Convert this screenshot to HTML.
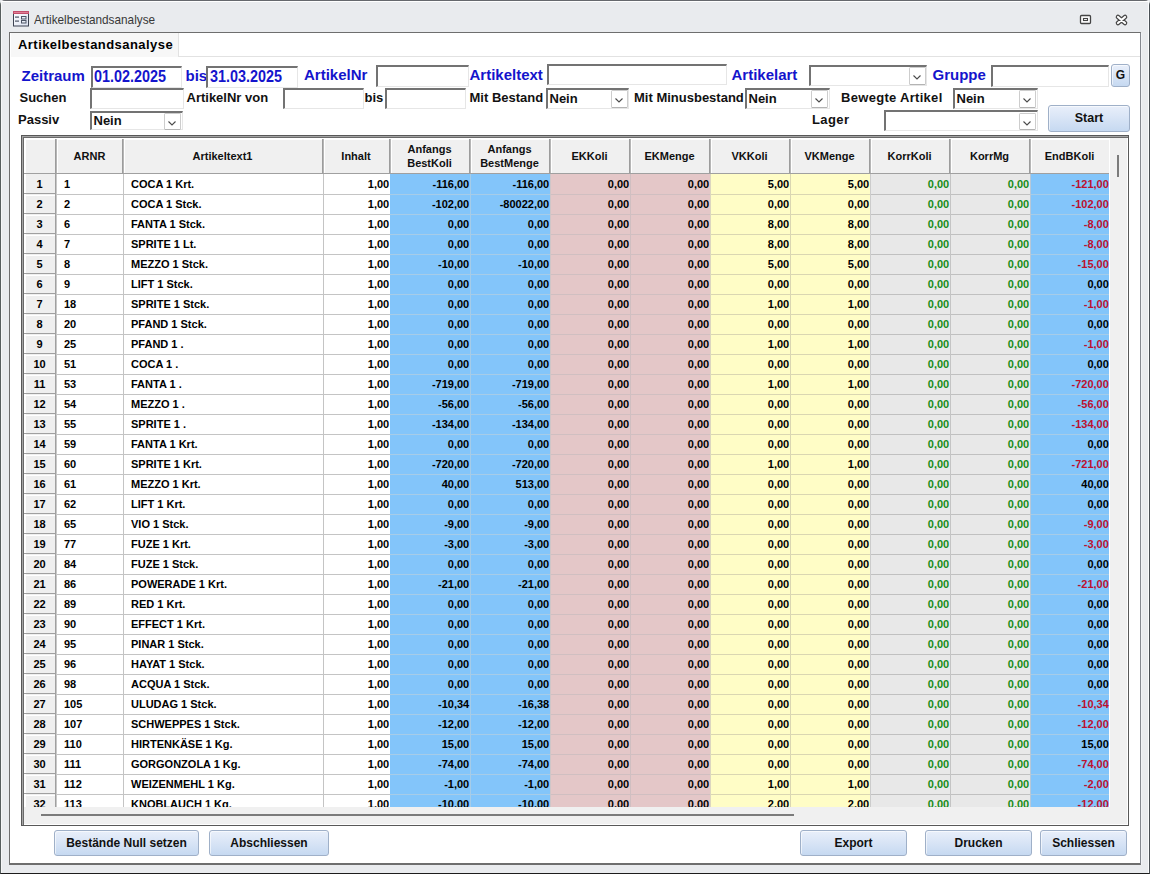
<!DOCTYPE html>
<html><head><meta charset="utf-8"><title>Artikelbestandsanalyse</title>
<style>
html,body{margin:0;padding:0;}
body{width:1150px;height:874px;overflow:hidden;position:relative;background:#e9ebee;font-family:"Liberation Sans", sans-serif;}
div,span{position:absolute;box-sizing:border-box;}
span{white-space:nowrap;line-height:1;}
.tb{background:#fff;border-top:2px solid #737373;border-left:2px solid #737373;border-right:1px solid #e6e6e6;border-bottom:1px solid #e6e6e6;}
.dd{background:#fff;border:1px solid #cdcdcd;border-bottom-color:#b4b4b4;border-radius:1.5px;}
.btn{border:1px solid #9fb0c8;border-radius:3px;background:linear-gradient(#e9effa,#c6d9f1);box-shadow:inset 1px 1px 0 rgba(255,255,255,.6);}
</style></head><body>

<div style="left:0px;top:0px;width:1150px;height:874px;border:1px solid #575e5e;border-top-color:#66686d;border-right-color:#4a5055;border-bottom-color:#1c1c1c;border-radius:5px 5px 0 0;"></div>
<div style="left:1px;top:1px;width:1148px;height:1px;background:#fff;"></div>
<div style="left:1px;top:1px;width:1px;height:872px;background:#f6f7f8;"></div>
<div style="left:1148px;top:1px;width:1px;height:872px;background:#fbfcfd;"></div>
<div style="left:1141px;top:33px;width:1px;height:832px;background:#f1f3f6;"></div>
<svg style="position:absolute;left:13px;top:11px" width="16" height="16" viewBox="0 0 16 16">
<defs><linearGradient id="ig" x1="0" y1="0" x2="1" y2="1"><stop offset="0" stop-color="#ffffff"/><stop offset="1" stop-color="#dde3f2"/></linearGradient></defs>
<rect x="0.5" y="0.5" width="15" height="14.5" fill="url(#ig)" stroke="#3d4352"/>
<rect x="0" y="0" width="16" height="3" fill="#c24f6c"/>
<rect x="1" y="1" width="14" height="1" fill="#e07d95"/>
<rect x="2" y="5.5" width="4" height="1.2" fill="#4d5566"/>
<rect x="2" y="9.5" width="4" height="1.2" fill="#4d5566"/>
<rect x="8.5" y="5.5" width="4.5" height="2.5" fill="#e9edf6" stroke="#4d5566" stroke-width="1"/>
<rect x="8.5" y="9.5" width="4.5" height="2.5" fill="#e9edf6" stroke="#4d5566" stroke-width="1"/>
</svg>
<span style="left:33.50px;top:13.73px;font-size:12.6px;font-weight:normal;color:#383838;transform:scaleX(0.935);transform-origin:0 0;">Artikelbestandsanalyse</span>
<svg style="position:absolute;left:1078px;top:13px" width="52" height="14" viewBox="0 0 52 14">
<rect x="2.5" y="2.5" width="10" height="8" rx="1" fill="#fff" stroke="#444" stroke-width="1.3"/>
<rect x="5.5" y="5.5" width="4" height="2" fill="#fff" stroke="#444" stroke-width="1.1"/>
<path d="M40 4 L47 10 M47 4 L40 10" stroke="#464646" stroke-width="4.6" stroke-linecap="round"/>
<path d="M40 4 L47 10 M47 4 L40 10" stroke="#fff" stroke-width="2.2" stroke-linecap="round"/>
</svg>
<div style="left:9px;top:32px;width:1132px;height:833px;background:#fff;border-left:1px solid #6e6e6e;border-top:1px solid #6e6e6e;border-right:1px solid #858990;border-bottom:2px solid #6e6e6e;"></div>
<div style="left:178px;top:33px;width:962px;height:24px;background:#fff;border-left:1px solid #e2e2e2;border-bottom:1px solid #e2e2e2;"></div>
<div style="left:10px;top:33px;width:168px;height:24px;background:#f7f7f7;border-left:1px solid #fff;"></div>
<span style="left:18.00px;top:38.40px;font-size:13px;font-weight:bold;color:#000;letter-spacing:0.45px">Artikelbestandsanalyse</span>
<span style="left:21.50px;top:68.00px;font-size:15px;font-weight:bold;color:#1414cc;">Zeitraum</span>
<div class="tb" style="left:91px;top:66px;width:91px;height:22px"></div>
<span style="left:94.00px;top:68.83px;font-size:15.8px;font-weight:bold;color:#1414cc;transform:scaleX(0.91);transform-origin:0 0;">01.02.2025</span>
<span style="left:185.50px;top:68.30px;font-size:15px;font-weight:bold;color:#1414cc;">bis</span>
<div class="tb" style="left:206px;top:66px;width:92px;height:22px"></div>
<span style="left:209.50px;top:68.83px;font-size:15.8px;font-weight:bold;color:#1414cc;transform:scaleX(0.91);transform-origin:0 0;">31.03.2025</span>
<span style="left:304.00px;top:67.10px;font-size:15px;font-weight:bold;color:#1414cc;">ArtikelNr</span>
<div class="tb" style="left:376px;top:65px;width:93px;height:22px"></div>
<span style="left:469.50px;top:67.10px;font-size:15px;font-weight:bold;color:#1414cc;">Artikeltext</span>
<div class="tb" style="left:547px;top:64px;width:180px;height:21px"></div>
<span style="left:731.50px;top:67.10px;font-size:15px;font-weight:bold;color:#1414cc;">Artikelart</span>
<div class="tb" style="left:809px;top:65px;width:118px;height:21px"></div>
<div class="dd" style="left:909px;top:67px;width:17px;height:18px"></div>
<svg style="position:absolute;left:911.5px;top:73.1px" width="10" height="8" viewBox="0 0 10 8"><path d="M1.5 2.5 L5 6 L8.5 2.5" fill="none" stroke="#4a4a4a" stroke-width="1.1"/></svg>
<span style="left:932.50px;top:67.10px;font-size:15px;font-weight:bold;color:#1414cc;">Gruppe</span>
<div class="tb" style="left:991px;top:65px;width:118px;height:22px"></div>
<div class="btn" style="left:1111px;top:64px;width:19px;height:23px"></div>
<span style="left:1110.50px;width:20px;text-align:center;top:69.34px;font-size:12px;font-weight:bold;color:#111;">G</span>
<span style="left:19.50px;top:91.30px;font-size:13px;font-weight:bold;color:#111;">Suchen</span>
<div class="tb" style="left:90px;top:88px;width:94px;height:21px"></div>
<span style="left:186.50px;top:90.70px;font-size:13px;font-weight:bold;color:#111;">ArtikelNr von</span>
<div class="tb" style="left:283px;top:88px;width:81px;height:21px"></div>
<span style="left:364.50px;top:90.70px;font-size:13px;font-weight:bold;color:#111;">bis</span>
<div class="tb" style="left:385px;top:88px;width:81px;height:21px"></div>
<span style="left:469.50px;top:90.70px;font-size:13px;font-weight:bold;color:#111;">Mit Bestand</span>
<div class="tb" style="left:546px;top:88px;width:83px;height:21px"></div>
<div class="dd" style="left:611px;top:90px;width:17px;height:18px"></div>
<svg style="position:absolute;left:613.5px;top:96.1px" width="10" height="8" viewBox="0 0 10 8"><path d="M1.5 2.5 L5 6 L8.5 2.5" fill="none" stroke="#4a4a4a" stroke-width="1.1"/></svg>
<span style="left:549.50px;top:91.60px;font-size:13px;font-weight:bold;color:#111;">Nein</span>
<span style="left:634.00px;top:90.70px;font-size:13px;font-weight:bold;color:#111;">Mit Minusbestand</span>
<div class="tb" style="left:745px;top:88px;width:85px;height:21px"></div>
<div class="dd" style="left:811px;top:90px;width:17px;height:18px"></div>
<svg style="position:absolute;left:813.5px;top:96.1px" width="10" height="8" viewBox="0 0 10 8"><path d="M1.5 2.5 L5 6 L8.5 2.5" fill="none" stroke="#4a4a4a" stroke-width="1.1"/></svg>
<span style="left:748.50px;top:91.60px;font-size:13px;font-weight:bold;color:#111;">Nein</span>
<span style="left:841.00px;top:90.70px;font-size:13px;font-weight:bold;color:#111;letter-spacing:0.3px">Bewegte Artikel</span>
<div class="tb" style="left:953px;top:88px;width:85px;height:21px"></div>
<div class="dd" style="left:1019px;top:90px;width:17px;height:18px"></div>
<svg style="position:absolute;left:1021.5px;top:96.1px" width="10" height="8" viewBox="0 0 10 8"><path d="M1.5 2.5 L5 6 L8.5 2.5" fill="none" stroke="#4a4a4a" stroke-width="1.1"/></svg>
<span style="left:956.50px;top:91.60px;font-size:13px;font-weight:bold;color:#111;">Nein</span>
<span style="left:18.00px;top:112.90px;font-size:13px;font-weight:bold;color:#111;">Passiv</span>
<div class="tb" style="left:90px;top:111px;width:93px;height:19px"></div>
<div class="dd" style="left:164px;top:113px;width:17px;height:17px"></div>
<svg style="position:absolute;left:166.5px;top:118.6px" width="10" height="8" viewBox="0 0 10 8"><path d="M1.5 2.5 L5 6 L8.5 2.5" fill="none" stroke="#4a4a4a" stroke-width="1.1"/></svg>
<span style="left:93.50px;top:114.00px;font-size:13px;font-weight:bold;color:#111;">Nein</span>
<span style="left:812.00px;top:113.00px;font-size:13px;font-weight:bold;color:#111;letter-spacing:0.4px">Lager</span>
<div class="tb" style="left:884px;top:110px;width:154px;height:21px"></div>
<div class="dd" style="left:1019px;top:113px;width:17px;height:17px"></div>
<svg style="position:absolute;left:1021.5px;top:118.6px" width="10" height="8" viewBox="0 0 10 8"><path d="M1.5 2.5 L5 6 L8.5 2.5" fill="none" stroke="#4a4a4a" stroke-width="1.1"/></svg>
<div class="btn" style="left:1048px;top:105px;width:82px;height:27px"></div>
<span style="left:1049.00px;width:80px;text-align:center;top:112.42px;font-size:12.5px;font-weight:bold;color:#111;">Start</span>
<div style="left:21px;top:135px;width:1108px;height:691px;background:#fff;border:1px solid #585858;"></div>
<div style="left:22px;top:136px;width:1px;height:689px;background:#a4a4a4;"></div>
<div style="left:22px;top:136px;width:1106px;height:1px;background:#a4a4a4;"></div>
<div style="left:23px;top:137px;width:1px;height:688px;background:#6a6a6a;"></div>
<div style="left:23px;top:137px;width:1105px;height:1px;background:#6a6a6a;"></div>
<div style="left:24px;top:138px;width:1085px;height:36px;background:#f0f0f0;border-top:2px solid #fff;border-left:2px solid #fff;"></div>
<div style="left:1109px;top:138px;width:1px;height:669px;background:#fff;"></div>
<div style="left:24px;top:173px;width:1085px;height:1px;background:#a0a0a0;"></div>
<div style="left:55px;top:139px;width:1px;height:34px;background:#9c9c9c;"></div>
<div style="left:56px;top:139px;width:1px;height:34px;background:#b6b6b6;"></div>
<div style="left:57px;top:140px;width:1px;height:33px;background:#fff;"></div>
<div style="left:122px;top:139px;width:1px;height:34px;background:#9c9c9c;"></div>
<div style="left:123px;top:139px;width:1px;height:34px;background:#b6b6b6;"></div>
<div style="left:124px;top:140px;width:1px;height:33px;background:#fff;"></div>
<div style="left:322px;top:139px;width:1px;height:34px;background:#9c9c9c;"></div>
<div style="left:323px;top:139px;width:1px;height:34px;background:#b6b6b6;"></div>
<div style="left:324px;top:140px;width:1px;height:33px;background:#fff;"></div>
<div style="left:389px;top:139px;width:1px;height:34px;background:#9c9c9c;"></div>
<div style="left:390px;top:139px;width:1px;height:34px;background:#b6b6b6;"></div>
<div style="left:391px;top:140px;width:1px;height:33px;background:#fff;"></div>
<div style="left:469px;top:139px;width:1px;height:34px;background:#9c9c9c;"></div>
<div style="left:470px;top:139px;width:1px;height:34px;background:#b6b6b6;"></div>
<div style="left:471px;top:140px;width:1px;height:33px;background:#fff;"></div>
<div style="left:549px;top:139px;width:1px;height:34px;background:#9c9c9c;"></div>
<div style="left:550px;top:139px;width:1px;height:34px;background:#b6b6b6;"></div>
<div style="left:551px;top:140px;width:1px;height:33px;background:#fff;"></div>
<div style="left:629px;top:139px;width:1px;height:34px;background:#9c9c9c;"></div>
<div style="left:630px;top:139px;width:1px;height:34px;background:#b6b6b6;"></div>
<div style="left:631px;top:140px;width:1px;height:33px;background:#fff;"></div>
<div style="left:709px;top:139px;width:1px;height:34px;background:#9c9c9c;"></div>
<div style="left:710px;top:139px;width:1px;height:34px;background:#b6b6b6;"></div>
<div style="left:711px;top:140px;width:1px;height:33px;background:#fff;"></div>
<div style="left:789px;top:139px;width:1px;height:34px;background:#9c9c9c;"></div>
<div style="left:790px;top:139px;width:1px;height:34px;background:#b6b6b6;"></div>
<div style="left:791px;top:140px;width:1px;height:33px;background:#fff;"></div>
<div style="left:869px;top:139px;width:1px;height:34px;background:#9c9c9c;"></div>
<div style="left:870px;top:139px;width:1px;height:34px;background:#b6b6b6;"></div>
<div style="left:871px;top:140px;width:1px;height:33px;background:#fff;"></div>
<div style="left:949px;top:139px;width:1px;height:34px;background:#9c9c9c;"></div>
<div style="left:950px;top:139px;width:1px;height:34px;background:#b6b6b6;"></div>
<div style="left:951px;top:140px;width:1px;height:33px;background:#fff;"></div>
<div style="left:1029px;top:139px;width:1px;height:34px;background:#9c9c9c;"></div>
<div style="left:1030px;top:139px;width:1px;height:34px;background:#b6b6b6;"></div>
<div style="left:1031px;top:140px;width:1px;height:33px;background:#fff;"></div>
<div style="left:24px;top:174px;width:1086px;height:633px;overflow:hidden;">
<div style="left:33px;top:0px;width:333px;height:642px;background:#fff;"></div>
<div style="left:366px;top:0px;width:160px;height:642px;background:#83c5fa;"></div>
<div style="left:526px;top:0px;width:160px;height:642px;background:#e4c7c8;"></div>
<div style="left:686px;top:0px;width:160px;height:642px;background:#fffdc6;"></div>
<div style="left:846px;top:0px;width:160px;height:642px;background:#e8e8e8;"></div>
<div style="left:1006px;top:0px;width:79px;height:642px;background:#83c5fa;"></div>
<div style="left:1085px;top:0px;width:1px;height:642px;background:#fff;"></div>
<div style="left:33px;top:20px;width:333px;height:1px;background:#c4c4c4;"></div>
<div style="left:366px;top:20px;width:160px;height:1px;background:#a6cce8;"></div>
<div style="left:526px;top:20px;width:160px;height:1px;background:#d0bfc1;"></div>
<div style="left:686px;top:20px;width:160px;height:1px;background:#dad6b2;"></div>
<div style="left:846px;top:20px;width:160px;height:1px;background:#c0c0c0;"></div>
<div style="left:1006px;top:20px;width:79px;height:1px;background:#a6cce8;"></div>
<div style="left:33px;top:40px;width:333px;height:1px;background:#c4c4c4;"></div>
<div style="left:366px;top:40px;width:160px;height:1px;background:#a6cce8;"></div>
<div style="left:526px;top:40px;width:160px;height:1px;background:#d0bfc1;"></div>
<div style="left:686px;top:40px;width:160px;height:1px;background:#dad6b2;"></div>
<div style="left:846px;top:40px;width:160px;height:1px;background:#c0c0c0;"></div>
<div style="left:1006px;top:40px;width:79px;height:1px;background:#a6cce8;"></div>
<div style="left:33px;top:60px;width:333px;height:1px;background:#c4c4c4;"></div>
<div style="left:366px;top:60px;width:160px;height:1px;background:#a6cce8;"></div>
<div style="left:526px;top:60px;width:160px;height:1px;background:#d0bfc1;"></div>
<div style="left:686px;top:60px;width:160px;height:1px;background:#dad6b2;"></div>
<div style="left:846px;top:60px;width:160px;height:1px;background:#c0c0c0;"></div>
<div style="left:1006px;top:60px;width:79px;height:1px;background:#a6cce8;"></div>
<div style="left:33px;top:80px;width:333px;height:1px;background:#c4c4c4;"></div>
<div style="left:366px;top:80px;width:160px;height:1px;background:#a6cce8;"></div>
<div style="left:526px;top:80px;width:160px;height:1px;background:#d0bfc1;"></div>
<div style="left:686px;top:80px;width:160px;height:1px;background:#dad6b2;"></div>
<div style="left:846px;top:80px;width:160px;height:1px;background:#c0c0c0;"></div>
<div style="left:1006px;top:80px;width:79px;height:1px;background:#a6cce8;"></div>
<div style="left:33px;top:100px;width:333px;height:1px;background:#c4c4c4;"></div>
<div style="left:366px;top:100px;width:160px;height:1px;background:#a6cce8;"></div>
<div style="left:526px;top:100px;width:160px;height:1px;background:#d0bfc1;"></div>
<div style="left:686px;top:100px;width:160px;height:1px;background:#dad6b2;"></div>
<div style="left:846px;top:100px;width:160px;height:1px;background:#c0c0c0;"></div>
<div style="left:1006px;top:100px;width:79px;height:1px;background:#a6cce8;"></div>
<div style="left:33px;top:120px;width:333px;height:1px;background:#c4c4c4;"></div>
<div style="left:366px;top:120px;width:160px;height:1px;background:#a6cce8;"></div>
<div style="left:526px;top:120px;width:160px;height:1px;background:#d0bfc1;"></div>
<div style="left:686px;top:120px;width:160px;height:1px;background:#dad6b2;"></div>
<div style="left:846px;top:120px;width:160px;height:1px;background:#c0c0c0;"></div>
<div style="left:1006px;top:120px;width:79px;height:1px;background:#a6cce8;"></div>
<div style="left:33px;top:140px;width:333px;height:1px;background:#c4c4c4;"></div>
<div style="left:366px;top:140px;width:160px;height:1px;background:#a6cce8;"></div>
<div style="left:526px;top:140px;width:160px;height:1px;background:#d0bfc1;"></div>
<div style="left:686px;top:140px;width:160px;height:1px;background:#dad6b2;"></div>
<div style="left:846px;top:140px;width:160px;height:1px;background:#c0c0c0;"></div>
<div style="left:1006px;top:140px;width:79px;height:1px;background:#a6cce8;"></div>
<div style="left:33px;top:160px;width:333px;height:1px;background:#c4c4c4;"></div>
<div style="left:366px;top:160px;width:160px;height:1px;background:#a6cce8;"></div>
<div style="left:526px;top:160px;width:160px;height:1px;background:#d0bfc1;"></div>
<div style="left:686px;top:160px;width:160px;height:1px;background:#dad6b2;"></div>
<div style="left:846px;top:160px;width:160px;height:1px;background:#c0c0c0;"></div>
<div style="left:1006px;top:160px;width:79px;height:1px;background:#a6cce8;"></div>
<div style="left:33px;top:180px;width:333px;height:1px;background:#c4c4c4;"></div>
<div style="left:366px;top:180px;width:160px;height:1px;background:#a6cce8;"></div>
<div style="left:526px;top:180px;width:160px;height:1px;background:#d0bfc1;"></div>
<div style="left:686px;top:180px;width:160px;height:1px;background:#dad6b2;"></div>
<div style="left:846px;top:180px;width:160px;height:1px;background:#c0c0c0;"></div>
<div style="left:1006px;top:180px;width:79px;height:1px;background:#a6cce8;"></div>
<div style="left:33px;top:200px;width:333px;height:1px;background:#c4c4c4;"></div>
<div style="left:366px;top:200px;width:160px;height:1px;background:#a6cce8;"></div>
<div style="left:526px;top:200px;width:160px;height:1px;background:#d0bfc1;"></div>
<div style="left:686px;top:200px;width:160px;height:1px;background:#dad6b2;"></div>
<div style="left:846px;top:200px;width:160px;height:1px;background:#c0c0c0;"></div>
<div style="left:1006px;top:200px;width:79px;height:1px;background:#a6cce8;"></div>
<div style="left:33px;top:220px;width:333px;height:1px;background:#c4c4c4;"></div>
<div style="left:366px;top:220px;width:160px;height:1px;background:#a6cce8;"></div>
<div style="left:526px;top:220px;width:160px;height:1px;background:#d0bfc1;"></div>
<div style="left:686px;top:220px;width:160px;height:1px;background:#dad6b2;"></div>
<div style="left:846px;top:220px;width:160px;height:1px;background:#c0c0c0;"></div>
<div style="left:1006px;top:220px;width:79px;height:1px;background:#a6cce8;"></div>
<div style="left:33px;top:240px;width:333px;height:1px;background:#c4c4c4;"></div>
<div style="left:366px;top:240px;width:160px;height:1px;background:#a6cce8;"></div>
<div style="left:526px;top:240px;width:160px;height:1px;background:#d0bfc1;"></div>
<div style="left:686px;top:240px;width:160px;height:1px;background:#dad6b2;"></div>
<div style="left:846px;top:240px;width:160px;height:1px;background:#c0c0c0;"></div>
<div style="left:1006px;top:240px;width:79px;height:1px;background:#a6cce8;"></div>
<div style="left:33px;top:260px;width:333px;height:1px;background:#c4c4c4;"></div>
<div style="left:366px;top:260px;width:160px;height:1px;background:#a6cce8;"></div>
<div style="left:526px;top:260px;width:160px;height:1px;background:#d0bfc1;"></div>
<div style="left:686px;top:260px;width:160px;height:1px;background:#dad6b2;"></div>
<div style="left:846px;top:260px;width:160px;height:1px;background:#c0c0c0;"></div>
<div style="left:1006px;top:260px;width:79px;height:1px;background:#a6cce8;"></div>
<div style="left:33px;top:280px;width:333px;height:1px;background:#c4c4c4;"></div>
<div style="left:366px;top:280px;width:160px;height:1px;background:#a6cce8;"></div>
<div style="left:526px;top:280px;width:160px;height:1px;background:#d0bfc1;"></div>
<div style="left:686px;top:280px;width:160px;height:1px;background:#dad6b2;"></div>
<div style="left:846px;top:280px;width:160px;height:1px;background:#c0c0c0;"></div>
<div style="left:1006px;top:280px;width:79px;height:1px;background:#a6cce8;"></div>
<div style="left:33px;top:300px;width:333px;height:1px;background:#c4c4c4;"></div>
<div style="left:366px;top:300px;width:160px;height:1px;background:#a6cce8;"></div>
<div style="left:526px;top:300px;width:160px;height:1px;background:#d0bfc1;"></div>
<div style="left:686px;top:300px;width:160px;height:1px;background:#dad6b2;"></div>
<div style="left:846px;top:300px;width:160px;height:1px;background:#c0c0c0;"></div>
<div style="left:1006px;top:300px;width:79px;height:1px;background:#a6cce8;"></div>
<div style="left:33px;top:320px;width:333px;height:1px;background:#c4c4c4;"></div>
<div style="left:366px;top:320px;width:160px;height:1px;background:#a6cce8;"></div>
<div style="left:526px;top:320px;width:160px;height:1px;background:#d0bfc1;"></div>
<div style="left:686px;top:320px;width:160px;height:1px;background:#dad6b2;"></div>
<div style="left:846px;top:320px;width:160px;height:1px;background:#c0c0c0;"></div>
<div style="left:1006px;top:320px;width:79px;height:1px;background:#a6cce8;"></div>
<div style="left:33px;top:340px;width:333px;height:1px;background:#c4c4c4;"></div>
<div style="left:366px;top:340px;width:160px;height:1px;background:#a6cce8;"></div>
<div style="left:526px;top:340px;width:160px;height:1px;background:#d0bfc1;"></div>
<div style="left:686px;top:340px;width:160px;height:1px;background:#dad6b2;"></div>
<div style="left:846px;top:340px;width:160px;height:1px;background:#c0c0c0;"></div>
<div style="left:1006px;top:340px;width:79px;height:1px;background:#a6cce8;"></div>
<div style="left:33px;top:360px;width:333px;height:1px;background:#c4c4c4;"></div>
<div style="left:366px;top:360px;width:160px;height:1px;background:#a6cce8;"></div>
<div style="left:526px;top:360px;width:160px;height:1px;background:#d0bfc1;"></div>
<div style="left:686px;top:360px;width:160px;height:1px;background:#dad6b2;"></div>
<div style="left:846px;top:360px;width:160px;height:1px;background:#c0c0c0;"></div>
<div style="left:1006px;top:360px;width:79px;height:1px;background:#a6cce8;"></div>
<div style="left:33px;top:380px;width:333px;height:1px;background:#c4c4c4;"></div>
<div style="left:366px;top:380px;width:160px;height:1px;background:#a6cce8;"></div>
<div style="left:526px;top:380px;width:160px;height:1px;background:#d0bfc1;"></div>
<div style="left:686px;top:380px;width:160px;height:1px;background:#dad6b2;"></div>
<div style="left:846px;top:380px;width:160px;height:1px;background:#c0c0c0;"></div>
<div style="left:1006px;top:380px;width:79px;height:1px;background:#a6cce8;"></div>
<div style="left:33px;top:400px;width:333px;height:1px;background:#c4c4c4;"></div>
<div style="left:366px;top:400px;width:160px;height:1px;background:#a6cce8;"></div>
<div style="left:526px;top:400px;width:160px;height:1px;background:#d0bfc1;"></div>
<div style="left:686px;top:400px;width:160px;height:1px;background:#dad6b2;"></div>
<div style="left:846px;top:400px;width:160px;height:1px;background:#c0c0c0;"></div>
<div style="left:1006px;top:400px;width:79px;height:1px;background:#a6cce8;"></div>
<div style="left:33px;top:420px;width:333px;height:1px;background:#c4c4c4;"></div>
<div style="left:366px;top:420px;width:160px;height:1px;background:#a6cce8;"></div>
<div style="left:526px;top:420px;width:160px;height:1px;background:#d0bfc1;"></div>
<div style="left:686px;top:420px;width:160px;height:1px;background:#dad6b2;"></div>
<div style="left:846px;top:420px;width:160px;height:1px;background:#c0c0c0;"></div>
<div style="left:1006px;top:420px;width:79px;height:1px;background:#a6cce8;"></div>
<div style="left:33px;top:440px;width:333px;height:1px;background:#c4c4c4;"></div>
<div style="left:366px;top:440px;width:160px;height:1px;background:#a6cce8;"></div>
<div style="left:526px;top:440px;width:160px;height:1px;background:#d0bfc1;"></div>
<div style="left:686px;top:440px;width:160px;height:1px;background:#dad6b2;"></div>
<div style="left:846px;top:440px;width:160px;height:1px;background:#c0c0c0;"></div>
<div style="left:1006px;top:440px;width:79px;height:1px;background:#a6cce8;"></div>
<div style="left:33px;top:460px;width:333px;height:1px;background:#c4c4c4;"></div>
<div style="left:366px;top:460px;width:160px;height:1px;background:#a6cce8;"></div>
<div style="left:526px;top:460px;width:160px;height:1px;background:#d0bfc1;"></div>
<div style="left:686px;top:460px;width:160px;height:1px;background:#dad6b2;"></div>
<div style="left:846px;top:460px;width:160px;height:1px;background:#c0c0c0;"></div>
<div style="left:1006px;top:460px;width:79px;height:1px;background:#a6cce8;"></div>
<div style="left:33px;top:480px;width:333px;height:1px;background:#c4c4c4;"></div>
<div style="left:366px;top:480px;width:160px;height:1px;background:#a6cce8;"></div>
<div style="left:526px;top:480px;width:160px;height:1px;background:#d0bfc1;"></div>
<div style="left:686px;top:480px;width:160px;height:1px;background:#dad6b2;"></div>
<div style="left:846px;top:480px;width:160px;height:1px;background:#c0c0c0;"></div>
<div style="left:1006px;top:480px;width:79px;height:1px;background:#a6cce8;"></div>
<div style="left:33px;top:500px;width:333px;height:1px;background:#c4c4c4;"></div>
<div style="left:366px;top:500px;width:160px;height:1px;background:#a6cce8;"></div>
<div style="left:526px;top:500px;width:160px;height:1px;background:#d0bfc1;"></div>
<div style="left:686px;top:500px;width:160px;height:1px;background:#dad6b2;"></div>
<div style="left:846px;top:500px;width:160px;height:1px;background:#c0c0c0;"></div>
<div style="left:1006px;top:500px;width:79px;height:1px;background:#a6cce8;"></div>
<div style="left:33px;top:520px;width:333px;height:1px;background:#c4c4c4;"></div>
<div style="left:366px;top:520px;width:160px;height:1px;background:#a6cce8;"></div>
<div style="left:526px;top:520px;width:160px;height:1px;background:#d0bfc1;"></div>
<div style="left:686px;top:520px;width:160px;height:1px;background:#dad6b2;"></div>
<div style="left:846px;top:520px;width:160px;height:1px;background:#c0c0c0;"></div>
<div style="left:1006px;top:520px;width:79px;height:1px;background:#a6cce8;"></div>
<div style="left:33px;top:540px;width:333px;height:1px;background:#c4c4c4;"></div>
<div style="left:366px;top:540px;width:160px;height:1px;background:#a6cce8;"></div>
<div style="left:526px;top:540px;width:160px;height:1px;background:#d0bfc1;"></div>
<div style="left:686px;top:540px;width:160px;height:1px;background:#dad6b2;"></div>
<div style="left:846px;top:540px;width:160px;height:1px;background:#c0c0c0;"></div>
<div style="left:1006px;top:540px;width:79px;height:1px;background:#a6cce8;"></div>
<div style="left:33px;top:560px;width:333px;height:1px;background:#c4c4c4;"></div>
<div style="left:366px;top:560px;width:160px;height:1px;background:#a6cce8;"></div>
<div style="left:526px;top:560px;width:160px;height:1px;background:#d0bfc1;"></div>
<div style="left:686px;top:560px;width:160px;height:1px;background:#dad6b2;"></div>
<div style="left:846px;top:560px;width:160px;height:1px;background:#c0c0c0;"></div>
<div style="left:1006px;top:560px;width:79px;height:1px;background:#a6cce8;"></div>
<div style="left:33px;top:580px;width:333px;height:1px;background:#c4c4c4;"></div>
<div style="left:366px;top:580px;width:160px;height:1px;background:#a6cce8;"></div>
<div style="left:526px;top:580px;width:160px;height:1px;background:#d0bfc1;"></div>
<div style="left:686px;top:580px;width:160px;height:1px;background:#dad6b2;"></div>
<div style="left:846px;top:580px;width:160px;height:1px;background:#c0c0c0;"></div>
<div style="left:1006px;top:580px;width:79px;height:1px;background:#a6cce8;"></div>
<div style="left:33px;top:600px;width:333px;height:1px;background:#c4c4c4;"></div>
<div style="left:366px;top:600px;width:160px;height:1px;background:#a6cce8;"></div>
<div style="left:526px;top:600px;width:160px;height:1px;background:#d0bfc1;"></div>
<div style="left:686px;top:600px;width:160px;height:1px;background:#dad6b2;"></div>
<div style="left:846px;top:600px;width:160px;height:1px;background:#c0c0c0;"></div>
<div style="left:1006px;top:600px;width:79px;height:1px;background:#a6cce8;"></div>
<div style="left:33px;top:620px;width:333px;height:1px;background:#c4c4c4;"></div>
<div style="left:366px;top:620px;width:160px;height:1px;background:#a6cce8;"></div>
<div style="left:526px;top:620px;width:160px;height:1px;background:#d0bfc1;"></div>
<div style="left:686px;top:620px;width:160px;height:1px;background:#dad6b2;"></div>
<div style="left:846px;top:620px;width:160px;height:1px;background:#c0c0c0;"></div>
<div style="left:1006px;top:620px;width:79px;height:1px;background:#a6cce8;"></div>
<div style="left:33px;top:640px;width:333px;height:1px;background:#c4c4c4;"></div>
<div style="left:366px;top:640px;width:160px;height:1px;background:#a6cce8;"></div>
<div style="left:526px;top:640px;width:160px;height:1px;background:#d0bfc1;"></div>
<div style="left:686px;top:640px;width:160px;height:1px;background:#dad6b2;"></div>
<div style="left:846px;top:640px;width:160px;height:1px;background:#c0c0c0;"></div>
<div style="left:1006px;top:640px;width:79px;height:1px;background:#a6cce8;"></div>
<div style="left:99px;top:0px;width:1px;height:642px;background:#c4c4c4;"></div>
<div style="left:299px;top:0px;width:1px;height:642px;background:#c4c4c4;"></div>
<div style="left:446px;top:0px;width:1px;height:642px;background:#a6cce8;"></div>
<div style="left:526px;top:0px;width:1px;height:642px;background:#cfc6c8;"></div>
<div style="left:606px;top:0px;width:1px;height:642px;background:#d0bfc1;"></div>
<div style="left:686px;top:0px;width:1px;height:642px;background:#dcd6c0;"></div>
<div style="left:766px;top:0px;width:1px;height:642px;background:#dad6b2;"></div>
<div style="left:846px;top:0px;width:1px;height:642px;background:#cccccc;"></div>
<div style="left:926px;top:0px;width:1px;height:642px;background:#c4c4c4;"></div>
<div style="left:1006px;top:0px;width:1px;height:642px;background:#b8c8d8;"></div>
<div style="left:0px;top:0px;width:31px;height:642px;background:#efefef;"></div>
<div style="left:0px;top:0px;width:2px;height:642px;background:#fff;"></div>
<div style="left:31px;top:0px;width:1px;height:642px;background:#a0a0a0;"></div>
<div style="left:32px;top:0px;width:1px;height:642px;background:#c8c8c8;"></div>
<div style="left:0px;top:19px;width:31px;height:1px;background:#a0a0a0;"></div>
<div style="left:2px;top:21px;width:29px;height:1px;background:#fff;"></div>
<div style="left:0px;top:39px;width:31px;height:1px;background:#a0a0a0;"></div>
<div style="left:2px;top:41px;width:29px;height:1px;background:#fff;"></div>
<div style="left:0px;top:59px;width:31px;height:1px;background:#a0a0a0;"></div>
<div style="left:2px;top:61px;width:29px;height:1px;background:#fff;"></div>
<div style="left:0px;top:79px;width:31px;height:1px;background:#a0a0a0;"></div>
<div style="left:2px;top:81px;width:29px;height:1px;background:#fff;"></div>
<div style="left:0px;top:99px;width:31px;height:1px;background:#a0a0a0;"></div>
<div style="left:2px;top:101px;width:29px;height:1px;background:#fff;"></div>
<div style="left:0px;top:119px;width:31px;height:1px;background:#a0a0a0;"></div>
<div style="left:2px;top:121px;width:29px;height:1px;background:#fff;"></div>
<div style="left:0px;top:139px;width:31px;height:1px;background:#a0a0a0;"></div>
<div style="left:2px;top:141px;width:29px;height:1px;background:#fff;"></div>
<div style="left:0px;top:159px;width:31px;height:1px;background:#a0a0a0;"></div>
<div style="left:2px;top:161px;width:29px;height:1px;background:#fff;"></div>
<div style="left:0px;top:179px;width:31px;height:1px;background:#a0a0a0;"></div>
<div style="left:2px;top:181px;width:29px;height:1px;background:#fff;"></div>
<div style="left:0px;top:199px;width:31px;height:1px;background:#a0a0a0;"></div>
<div style="left:2px;top:201px;width:29px;height:1px;background:#fff;"></div>
<div style="left:0px;top:219px;width:31px;height:1px;background:#a0a0a0;"></div>
<div style="left:2px;top:221px;width:29px;height:1px;background:#fff;"></div>
<div style="left:0px;top:239px;width:31px;height:1px;background:#a0a0a0;"></div>
<div style="left:2px;top:241px;width:29px;height:1px;background:#fff;"></div>
<div style="left:0px;top:259px;width:31px;height:1px;background:#a0a0a0;"></div>
<div style="left:2px;top:261px;width:29px;height:1px;background:#fff;"></div>
<div style="left:0px;top:279px;width:31px;height:1px;background:#a0a0a0;"></div>
<div style="left:2px;top:281px;width:29px;height:1px;background:#fff;"></div>
<div style="left:0px;top:299px;width:31px;height:1px;background:#a0a0a0;"></div>
<div style="left:2px;top:301px;width:29px;height:1px;background:#fff;"></div>
<div style="left:0px;top:319px;width:31px;height:1px;background:#a0a0a0;"></div>
<div style="left:2px;top:321px;width:29px;height:1px;background:#fff;"></div>
<div style="left:0px;top:339px;width:31px;height:1px;background:#a0a0a0;"></div>
<div style="left:2px;top:341px;width:29px;height:1px;background:#fff;"></div>
<div style="left:0px;top:359px;width:31px;height:1px;background:#a0a0a0;"></div>
<div style="left:2px;top:361px;width:29px;height:1px;background:#fff;"></div>
<div style="left:0px;top:379px;width:31px;height:1px;background:#a0a0a0;"></div>
<div style="left:2px;top:381px;width:29px;height:1px;background:#fff;"></div>
<div style="left:0px;top:399px;width:31px;height:1px;background:#a0a0a0;"></div>
<div style="left:2px;top:401px;width:29px;height:1px;background:#fff;"></div>
<div style="left:0px;top:419px;width:31px;height:1px;background:#a0a0a0;"></div>
<div style="left:2px;top:421px;width:29px;height:1px;background:#fff;"></div>
<div style="left:0px;top:439px;width:31px;height:1px;background:#a0a0a0;"></div>
<div style="left:2px;top:441px;width:29px;height:1px;background:#fff;"></div>
<div style="left:0px;top:459px;width:31px;height:1px;background:#a0a0a0;"></div>
<div style="left:2px;top:461px;width:29px;height:1px;background:#fff;"></div>
<div style="left:0px;top:479px;width:31px;height:1px;background:#a0a0a0;"></div>
<div style="left:2px;top:481px;width:29px;height:1px;background:#fff;"></div>
<div style="left:0px;top:499px;width:31px;height:1px;background:#a0a0a0;"></div>
<div style="left:2px;top:501px;width:29px;height:1px;background:#fff;"></div>
<div style="left:0px;top:519px;width:31px;height:1px;background:#a0a0a0;"></div>
<div style="left:2px;top:521px;width:29px;height:1px;background:#fff;"></div>
<div style="left:0px;top:539px;width:31px;height:1px;background:#a0a0a0;"></div>
<div style="left:2px;top:541px;width:29px;height:1px;background:#fff;"></div>
<div style="left:0px;top:559px;width:31px;height:1px;background:#a0a0a0;"></div>
<div style="left:2px;top:561px;width:29px;height:1px;background:#fff;"></div>
<div style="left:0px;top:579px;width:31px;height:1px;background:#a0a0a0;"></div>
<div style="left:2px;top:581px;width:29px;height:1px;background:#fff;"></div>
<div style="left:0px;top:599px;width:31px;height:1px;background:#a0a0a0;"></div>
<div style="left:2px;top:601px;width:29px;height:1px;background:#fff;"></div>
<div style="left:0px;top:619px;width:31px;height:1px;background:#a0a0a0;"></div>
<div style="left:2px;top:621px;width:29px;height:1px;background:#fff;"></div>
<div style="left:0px;top:639px;width:31px;height:1px;background:#a0a0a0;"></div>
<div style="left:2px;top:641px;width:29px;height:1px;background:#fff;"></div>
<span style="left:0px;width:31px;text-align:center;top:5.49px;font-size:11px;font-weight:bold;color:#000">1</span>
<span style="left:40.00px;top:5.49px;font-size:11px;font-weight:bold;color:#000">1</span>
<span style="left:107.00px;top:5.49px;font-size:11px;font-weight:bold;color:#000">COCA 1 Krt.</span>
<span style="right:720.80px;top:5.49px;font-size:11px;font-weight:bold;color:#000">1,00</span>
<span style="right:640.80px;top:5.49px;font-size:11px;font-weight:bold;color:#000">-116,00</span>
<span style="right:560.80px;top:5.49px;font-size:11px;font-weight:bold;color:#000">-116,00</span>
<span style="right:480.80px;top:5.49px;font-size:11px;font-weight:bold;color:#000">0,00</span>
<span style="right:400.80px;top:5.49px;font-size:11px;font-weight:bold;color:#000">0,00</span>
<span style="right:320.80px;top:5.49px;font-size:11px;font-weight:bold;color:#000">5,00</span>
<span style="right:240.80px;top:5.49px;font-size:11px;font-weight:bold;color:#000">5,00</span>
<span style="right:160.80px;top:5.49px;font-size:11px;font-weight:bold;color:#178c17">0,00</span>
<span style="right:80.80px;top:5.49px;font-size:11px;font-weight:bold;color:#178c17">0,00</span>
<span style="right:1.20px;top:5.49px;font-size:11px;font-weight:bold;color:#bc102e">-121,00</span>
<span style="left:0px;width:31px;text-align:center;top:25.49px;font-size:11px;font-weight:bold;color:#000">2</span>
<span style="left:40.00px;top:25.49px;font-size:11px;font-weight:bold;color:#000">2</span>
<span style="left:107.00px;top:25.49px;font-size:11px;font-weight:bold;color:#000">COCA 1 Stck.</span>
<span style="right:720.80px;top:25.49px;font-size:11px;font-weight:bold;color:#000">1,00</span>
<span style="right:640.80px;top:25.49px;font-size:11px;font-weight:bold;color:#000">-102,00</span>
<span style="right:560.80px;top:25.49px;font-size:11px;font-weight:bold;color:#000">-80022,00</span>
<span style="right:480.80px;top:25.49px;font-size:11px;font-weight:bold;color:#000">0,00</span>
<span style="right:400.80px;top:25.49px;font-size:11px;font-weight:bold;color:#000">0,00</span>
<span style="right:320.80px;top:25.49px;font-size:11px;font-weight:bold;color:#000">0,00</span>
<span style="right:240.80px;top:25.49px;font-size:11px;font-weight:bold;color:#000">0,00</span>
<span style="right:160.80px;top:25.49px;font-size:11px;font-weight:bold;color:#178c17">0,00</span>
<span style="right:80.80px;top:25.49px;font-size:11px;font-weight:bold;color:#178c17">0,00</span>
<span style="right:1.20px;top:25.49px;font-size:11px;font-weight:bold;color:#bc102e">-102,00</span>
<span style="left:0px;width:31px;text-align:center;top:45.49px;font-size:11px;font-weight:bold;color:#000">3</span>
<span style="left:40.00px;top:45.49px;font-size:11px;font-weight:bold;color:#000">6</span>
<span style="left:107.00px;top:45.49px;font-size:11px;font-weight:bold;color:#000">FANTA 1 Stck.</span>
<span style="right:720.80px;top:45.49px;font-size:11px;font-weight:bold;color:#000">1,00</span>
<span style="right:640.80px;top:45.49px;font-size:11px;font-weight:bold;color:#000">0,00</span>
<span style="right:560.80px;top:45.49px;font-size:11px;font-weight:bold;color:#000">0,00</span>
<span style="right:480.80px;top:45.49px;font-size:11px;font-weight:bold;color:#000">0,00</span>
<span style="right:400.80px;top:45.49px;font-size:11px;font-weight:bold;color:#000">0,00</span>
<span style="right:320.80px;top:45.49px;font-size:11px;font-weight:bold;color:#000">8,00</span>
<span style="right:240.80px;top:45.49px;font-size:11px;font-weight:bold;color:#000">8,00</span>
<span style="right:160.80px;top:45.49px;font-size:11px;font-weight:bold;color:#178c17">0,00</span>
<span style="right:80.80px;top:45.49px;font-size:11px;font-weight:bold;color:#178c17">0,00</span>
<span style="right:1.20px;top:45.49px;font-size:11px;font-weight:bold;color:#bc102e">-8,00</span>
<span style="left:0px;width:31px;text-align:center;top:65.49px;font-size:11px;font-weight:bold;color:#000">4</span>
<span style="left:40.00px;top:65.49px;font-size:11px;font-weight:bold;color:#000">7</span>
<span style="left:107.00px;top:65.49px;font-size:11px;font-weight:bold;color:#000">SPRITE 1 Lt.</span>
<span style="right:720.80px;top:65.49px;font-size:11px;font-weight:bold;color:#000">1,00</span>
<span style="right:640.80px;top:65.49px;font-size:11px;font-weight:bold;color:#000">0,00</span>
<span style="right:560.80px;top:65.49px;font-size:11px;font-weight:bold;color:#000">0,00</span>
<span style="right:480.80px;top:65.49px;font-size:11px;font-weight:bold;color:#000">0,00</span>
<span style="right:400.80px;top:65.49px;font-size:11px;font-weight:bold;color:#000">0,00</span>
<span style="right:320.80px;top:65.49px;font-size:11px;font-weight:bold;color:#000">8,00</span>
<span style="right:240.80px;top:65.49px;font-size:11px;font-weight:bold;color:#000">8,00</span>
<span style="right:160.80px;top:65.49px;font-size:11px;font-weight:bold;color:#178c17">0,00</span>
<span style="right:80.80px;top:65.49px;font-size:11px;font-weight:bold;color:#178c17">0,00</span>
<span style="right:1.20px;top:65.49px;font-size:11px;font-weight:bold;color:#bc102e">-8,00</span>
<span style="left:0px;width:31px;text-align:center;top:85.49px;font-size:11px;font-weight:bold;color:#000">5</span>
<span style="left:40.00px;top:85.49px;font-size:11px;font-weight:bold;color:#000">8</span>
<span style="left:107.00px;top:85.49px;font-size:11px;font-weight:bold;color:#000">MEZZO 1 Stck.</span>
<span style="right:720.80px;top:85.49px;font-size:11px;font-weight:bold;color:#000">1,00</span>
<span style="right:640.80px;top:85.49px;font-size:11px;font-weight:bold;color:#000">-10,00</span>
<span style="right:560.80px;top:85.49px;font-size:11px;font-weight:bold;color:#000">-10,00</span>
<span style="right:480.80px;top:85.49px;font-size:11px;font-weight:bold;color:#000">0,00</span>
<span style="right:400.80px;top:85.49px;font-size:11px;font-weight:bold;color:#000">0,00</span>
<span style="right:320.80px;top:85.49px;font-size:11px;font-weight:bold;color:#000">5,00</span>
<span style="right:240.80px;top:85.49px;font-size:11px;font-weight:bold;color:#000">5,00</span>
<span style="right:160.80px;top:85.49px;font-size:11px;font-weight:bold;color:#178c17">0,00</span>
<span style="right:80.80px;top:85.49px;font-size:11px;font-weight:bold;color:#178c17">0,00</span>
<span style="right:1.20px;top:85.49px;font-size:11px;font-weight:bold;color:#bc102e">-15,00</span>
<span style="left:0px;width:31px;text-align:center;top:105.49px;font-size:11px;font-weight:bold;color:#000">6</span>
<span style="left:40.00px;top:105.49px;font-size:11px;font-weight:bold;color:#000">9</span>
<span style="left:107.00px;top:105.49px;font-size:11px;font-weight:bold;color:#000">LIFT 1 Stck.</span>
<span style="right:720.80px;top:105.49px;font-size:11px;font-weight:bold;color:#000">1,00</span>
<span style="right:640.80px;top:105.49px;font-size:11px;font-weight:bold;color:#000">0,00</span>
<span style="right:560.80px;top:105.49px;font-size:11px;font-weight:bold;color:#000">0,00</span>
<span style="right:480.80px;top:105.49px;font-size:11px;font-weight:bold;color:#000">0,00</span>
<span style="right:400.80px;top:105.49px;font-size:11px;font-weight:bold;color:#000">0,00</span>
<span style="right:320.80px;top:105.49px;font-size:11px;font-weight:bold;color:#000">0,00</span>
<span style="right:240.80px;top:105.49px;font-size:11px;font-weight:bold;color:#000">0,00</span>
<span style="right:160.80px;top:105.49px;font-size:11px;font-weight:bold;color:#178c17">0,00</span>
<span style="right:80.80px;top:105.49px;font-size:11px;font-weight:bold;color:#178c17">0,00</span>
<span style="right:1.20px;top:105.49px;font-size:11px;font-weight:bold;color:#000">0,00</span>
<span style="left:0px;width:31px;text-align:center;top:125.49px;font-size:11px;font-weight:bold;color:#000">7</span>
<span style="left:40.00px;top:125.49px;font-size:11px;font-weight:bold;color:#000">18</span>
<span style="left:107.00px;top:125.49px;font-size:11px;font-weight:bold;color:#000">SPRITE 1 Stck.</span>
<span style="right:720.80px;top:125.49px;font-size:11px;font-weight:bold;color:#000">1,00</span>
<span style="right:640.80px;top:125.49px;font-size:11px;font-weight:bold;color:#000">0,00</span>
<span style="right:560.80px;top:125.49px;font-size:11px;font-weight:bold;color:#000">0,00</span>
<span style="right:480.80px;top:125.49px;font-size:11px;font-weight:bold;color:#000">0,00</span>
<span style="right:400.80px;top:125.49px;font-size:11px;font-weight:bold;color:#000">0,00</span>
<span style="right:320.80px;top:125.49px;font-size:11px;font-weight:bold;color:#000">1,00</span>
<span style="right:240.80px;top:125.49px;font-size:11px;font-weight:bold;color:#000">1,00</span>
<span style="right:160.80px;top:125.49px;font-size:11px;font-weight:bold;color:#178c17">0,00</span>
<span style="right:80.80px;top:125.49px;font-size:11px;font-weight:bold;color:#178c17">0,00</span>
<span style="right:1.20px;top:125.49px;font-size:11px;font-weight:bold;color:#bc102e">-1,00</span>
<span style="left:0px;width:31px;text-align:center;top:145.49px;font-size:11px;font-weight:bold;color:#000">8</span>
<span style="left:40.00px;top:145.49px;font-size:11px;font-weight:bold;color:#000">20</span>
<span style="left:107.00px;top:145.49px;font-size:11px;font-weight:bold;color:#000">PFAND 1 Stck.</span>
<span style="right:720.80px;top:145.49px;font-size:11px;font-weight:bold;color:#000">1,00</span>
<span style="right:640.80px;top:145.49px;font-size:11px;font-weight:bold;color:#000">0,00</span>
<span style="right:560.80px;top:145.49px;font-size:11px;font-weight:bold;color:#000">0,00</span>
<span style="right:480.80px;top:145.49px;font-size:11px;font-weight:bold;color:#000">0,00</span>
<span style="right:400.80px;top:145.49px;font-size:11px;font-weight:bold;color:#000">0,00</span>
<span style="right:320.80px;top:145.49px;font-size:11px;font-weight:bold;color:#000">0,00</span>
<span style="right:240.80px;top:145.49px;font-size:11px;font-weight:bold;color:#000">0,00</span>
<span style="right:160.80px;top:145.49px;font-size:11px;font-weight:bold;color:#178c17">0,00</span>
<span style="right:80.80px;top:145.49px;font-size:11px;font-weight:bold;color:#178c17">0,00</span>
<span style="right:1.20px;top:145.49px;font-size:11px;font-weight:bold;color:#000">0,00</span>
<span style="left:0px;width:31px;text-align:center;top:165.49px;font-size:11px;font-weight:bold;color:#000">9</span>
<span style="left:40.00px;top:165.49px;font-size:11px;font-weight:bold;color:#000">25</span>
<span style="left:107.00px;top:165.49px;font-size:11px;font-weight:bold;color:#000">PFAND 1 .</span>
<span style="right:720.80px;top:165.49px;font-size:11px;font-weight:bold;color:#000">1,00</span>
<span style="right:640.80px;top:165.49px;font-size:11px;font-weight:bold;color:#000">0,00</span>
<span style="right:560.80px;top:165.49px;font-size:11px;font-weight:bold;color:#000">0,00</span>
<span style="right:480.80px;top:165.49px;font-size:11px;font-weight:bold;color:#000">0,00</span>
<span style="right:400.80px;top:165.49px;font-size:11px;font-weight:bold;color:#000">0,00</span>
<span style="right:320.80px;top:165.49px;font-size:11px;font-weight:bold;color:#000">1,00</span>
<span style="right:240.80px;top:165.49px;font-size:11px;font-weight:bold;color:#000">1,00</span>
<span style="right:160.80px;top:165.49px;font-size:11px;font-weight:bold;color:#178c17">0,00</span>
<span style="right:80.80px;top:165.49px;font-size:11px;font-weight:bold;color:#178c17">0,00</span>
<span style="right:1.20px;top:165.49px;font-size:11px;font-weight:bold;color:#bc102e">-1,00</span>
<span style="left:0px;width:31px;text-align:center;top:185.49px;font-size:11px;font-weight:bold;color:#000">10</span>
<span style="left:40.00px;top:185.49px;font-size:11px;font-weight:bold;color:#000">51</span>
<span style="left:107.00px;top:185.49px;font-size:11px;font-weight:bold;color:#000">COCA 1 .</span>
<span style="right:720.80px;top:185.49px;font-size:11px;font-weight:bold;color:#000">1,00</span>
<span style="right:640.80px;top:185.49px;font-size:11px;font-weight:bold;color:#000">0,00</span>
<span style="right:560.80px;top:185.49px;font-size:11px;font-weight:bold;color:#000">0,00</span>
<span style="right:480.80px;top:185.49px;font-size:11px;font-weight:bold;color:#000">0,00</span>
<span style="right:400.80px;top:185.49px;font-size:11px;font-weight:bold;color:#000">0,00</span>
<span style="right:320.80px;top:185.49px;font-size:11px;font-weight:bold;color:#000">0,00</span>
<span style="right:240.80px;top:185.49px;font-size:11px;font-weight:bold;color:#000">0,00</span>
<span style="right:160.80px;top:185.49px;font-size:11px;font-weight:bold;color:#178c17">0,00</span>
<span style="right:80.80px;top:185.49px;font-size:11px;font-weight:bold;color:#178c17">0,00</span>
<span style="right:1.20px;top:185.49px;font-size:11px;font-weight:bold;color:#000">0,00</span>
<span style="left:0px;width:31px;text-align:center;top:205.49px;font-size:11px;font-weight:bold;color:#000">11</span>
<span style="left:40.00px;top:205.49px;font-size:11px;font-weight:bold;color:#000">53</span>
<span style="left:107.00px;top:205.49px;font-size:11px;font-weight:bold;color:#000">FANTA 1 .</span>
<span style="right:720.80px;top:205.49px;font-size:11px;font-weight:bold;color:#000">1,00</span>
<span style="right:640.80px;top:205.49px;font-size:11px;font-weight:bold;color:#000">-719,00</span>
<span style="right:560.80px;top:205.49px;font-size:11px;font-weight:bold;color:#000">-719,00</span>
<span style="right:480.80px;top:205.49px;font-size:11px;font-weight:bold;color:#000">0,00</span>
<span style="right:400.80px;top:205.49px;font-size:11px;font-weight:bold;color:#000">0,00</span>
<span style="right:320.80px;top:205.49px;font-size:11px;font-weight:bold;color:#000">1,00</span>
<span style="right:240.80px;top:205.49px;font-size:11px;font-weight:bold;color:#000">1,00</span>
<span style="right:160.80px;top:205.49px;font-size:11px;font-weight:bold;color:#178c17">0,00</span>
<span style="right:80.80px;top:205.49px;font-size:11px;font-weight:bold;color:#178c17">0,00</span>
<span style="right:1.20px;top:205.49px;font-size:11px;font-weight:bold;color:#bc102e">-720,00</span>
<span style="left:0px;width:31px;text-align:center;top:225.49px;font-size:11px;font-weight:bold;color:#000">12</span>
<span style="left:40.00px;top:225.49px;font-size:11px;font-weight:bold;color:#000">54</span>
<span style="left:107.00px;top:225.49px;font-size:11px;font-weight:bold;color:#000">MEZZO 1 .</span>
<span style="right:720.80px;top:225.49px;font-size:11px;font-weight:bold;color:#000">1,00</span>
<span style="right:640.80px;top:225.49px;font-size:11px;font-weight:bold;color:#000">-56,00</span>
<span style="right:560.80px;top:225.49px;font-size:11px;font-weight:bold;color:#000">-56,00</span>
<span style="right:480.80px;top:225.49px;font-size:11px;font-weight:bold;color:#000">0,00</span>
<span style="right:400.80px;top:225.49px;font-size:11px;font-weight:bold;color:#000">0,00</span>
<span style="right:320.80px;top:225.49px;font-size:11px;font-weight:bold;color:#000">0,00</span>
<span style="right:240.80px;top:225.49px;font-size:11px;font-weight:bold;color:#000">0,00</span>
<span style="right:160.80px;top:225.49px;font-size:11px;font-weight:bold;color:#178c17">0,00</span>
<span style="right:80.80px;top:225.49px;font-size:11px;font-weight:bold;color:#178c17">0,00</span>
<span style="right:1.20px;top:225.49px;font-size:11px;font-weight:bold;color:#bc102e">-56,00</span>
<span style="left:0px;width:31px;text-align:center;top:245.49px;font-size:11px;font-weight:bold;color:#000">13</span>
<span style="left:40.00px;top:245.49px;font-size:11px;font-weight:bold;color:#000">55</span>
<span style="left:107.00px;top:245.49px;font-size:11px;font-weight:bold;color:#000">SPRITE 1 .</span>
<span style="right:720.80px;top:245.49px;font-size:11px;font-weight:bold;color:#000">1,00</span>
<span style="right:640.80px;top:245.49px;font-size:11px;font-weight:bold;color:#000">-134,00</span>
<span style="right:560.80px;top:245.49px;font-size:11px;font-weight:bold;color:#000">-134,00</span>
<span style="right:480.80px;top:245.49px;font-size:11px;font-weight:bold;color:#000">0,00</span>
<span style="right:400.80px;top:245.49px;font-size:11px;font-weight:bold;color:#000">0,00</span>
<span style="right:320.80px;top:245.49px;font-size:11px;font-weight:bold;color:#000">0,00</span>
<span style="right:240.80px;top:245.49px;font-size:11px;font-weight:bold;color:#000">0,00</span>
<span style="right:160.80px;top:245.49px;font-size:11px;font-weight:bold;color:#178c17">0,00</span>
<span style="right:80.80px;top:245.49px;font-size:11px;font-weight:bold;color:#178c17">0,00</span>
<span style="right:1.20px;top:245.49px;font-size:11px;font-weight:bold;color:#bc102e">-134,00</span>
<span style="left:0px;width:31px;text-align:center;top:265.49px;font-size:11px;font-weight:bold;color:#000">14</span>
<span style="left:40.00px;top:265.49px;font-size:11px;font-weight:bold;color:#000">59</span>
<span style="left:107.00px;top:265.49px;font-size:11px;font-weight:bold;color:#000">FANTA 1 Krt.</span>
<span style="right:720.80px;top:265.49px;font-size:11px;font-weight:bold;color:#000">1,00</span>
<span style="right:640.80px;top:265.49px;font-size:11px;font-weight:bold;color:#000">0,00</span>
<span style="right:560.80px;top:265.49px;font-size:11px;font-weight:bold;color:#000">0,00</span>
<span style="right:480.80px;top:265.49px;font-size:11px;font-weight:bold;color:#000">0,00</span>
<span style="right:400.80px;top:265.49px;font-size:11px;font-weight:bold;color:#000">0,00</span>
<span style="right:320.80px;top:265.49px;font-size:11px;font-weight:bold;color:#000">0,00</span>
<span style="right:240.80px;top:265.49px;font-size:11px;font-weight:bold;color:#000">0,00</span>
<span style="right:160.80px;top:265.49px;font-size:11px;font-weight:bold;color:#178c17">0,00</span>
<span style="right:80.80px;top:265.49px;font-size:11px;font-weight:bold;color:#178c17">0,00</span>
<span style="right:1.20px;top:265.49px;font-size:11px;font-weight:bold;color:#000">0,00</span>
<span style="left:0px;width:31px;text-align:center;top:285.49px;font-size:11px;font-weight:bold;color:#000">15</span>
<span style="left:40.00px;top:285.49px;font-size:11px;font-weight:bold;color:#000">60</span>
<span style="left:107.00px;top:285.49px;font-size:11px;font-weight:bold;color:#000">SPRITE 1 Krt.</span>
<span style="right:720.80px;top:285.49px;font-size:11px;font-weight:bold;color:#000">1,00</span>
<span style="right:640.80px;top:285.49px;font-size:11px;font-weight:bold;color:#000">-720,00</span>
<span style="right:560.80px;top:285.49px;font-size:11px;font-weight:bold;color:#000">-720,00</span>
<span style="right:480.80px;top:285.49px;font-size:11px;font-weight:bold;color:#000">0,00</span>
<span style="right:400.80px;top:285.49px;font-size:11px;font-weight:bold;color:#000">0,00</span>
<span style="right:320.80px;top:285.49px;font-size:11px;font-weight:bold;color:#000">1,00</span>
<span style="right:240.80px;top:285.49px;font-size:11px;font-weight:bold;color:#000">1,00</span>
<span style="right:160.80px;top:285.49px;font-size:11px;font-weight:bold;color:#178c17">0,00</span>
<span style="right:80.80px;top:285.49px;font-size:11px;font-weight:bold;color:#178c17">0,00</span>
<span style="right:1.20px;top:285.49px;font-size:11px;font-weight:bold;color:#bc102e">-721,00</span>
<span style="left:0px;width:31px;text-align:center;top:305.49px;font-size:11px;font-weight:bold;color:#000">16</span>
<span style="left:40.00px;top:305.49px;font-size:11px;font-weight:bold;color:#000">61</span>
<span style="left:107.00px;top:305.49px;font-size:11px;font-weight:bold;color:#000">MEZZO 1 Krt.</span>
<span style="right:720.80px;top:305.49px;font-size:11px;font-weight:bold;color:#000">1,00</span>
<span style="right:640.80px;top:305.49px;font-size:11px;font-weight:bold;color:#000">40,00</span>
<span style="right:560.80px;top:305.49px;font-size:11px;font-weight:bold;color:#000">513,00</span>
<span style="right:480.80px;top:305.49px;font-size:11px;font-weight:bold;color:#000">0,00</span>
<span style="right:400.80px;top:305.49px;font-size:11px;font-weight:bold;color:#000">0,00</span>
<span style="right:320.80px;top:305.49px;font-size:11px;font-weight:bold;color:#000">0,00</span>
<span style="right:240.80px;top:305.49px;font-size:11px;font-weight:bold;color:#000">0,00</span>
<span style="right:160.80px;top:305.49px;font-size:11px;font-weight:bold;color:#178c17">0,00</span>
<span style="right:80.80px;top:305.49px;font-size:11px;font-weight:bold;color:#178c17">0,00</span>
<span style="right:1.20px;top:305.49px;font-size:11px;font-weight:bold;color:#000">40,00</span>
<span style="left:0px;width:31px;text-align:center;top:325.49px;font-size:11px;font-weight:bold;color:#000">17</span>
<span style="left:40.00px;top:325.49px;font-size:11px;font-weight:bold;color:#000">62</span>
<span style="left:107.00px;top:325.49px;font-size:11px;font-weight:bold;color:#000">LIFT 1 Krt.</span>
<span style="right:720.80px;top:325.49px;font-size:11px;font-weight:bold;color:#000">1,00</span>
<span style="right:640.80px;top:325.49px;font-size:11px;font-weight:bold;color:#000">0,00</span>
<span style="right:560.80px;top:325.49px;font-size:11px;font-weight:bold;color:#000">0,00</span>
<span style="right:480.80px;top:325.49px;font-size:11px;font-weight:bold;color:#000">0,00</span>
<span style="right:400.80px;top:325.49px;font-size:11px;font-weight:bold;color:#000">0,00</span>
<span style="right:320.80px;top:325.49px;font-size:11px;font-weight:bold;color:#000">0,00</span>
<span style="right:240.80px;top:325.49px;font-size:11px;font-weight:bold;color:#000">0,00</span>
<span style="right:160.80px;top:325.49px;font-size:11px;font-weight:bold;color:#178c17">0,00</span>
<span style="right:80.80px;top:325.49px;font-size:11px;font-weight:bold;color:#178c17">0,00</span>
<span style="right:1.20px;top:325.49px;font-size:11px;font-weight:bold;color:#000">0,00</span>
<span style="left:0px;width:31px;text-align:center;top:345.49px;font-size:11px;font-weight:bold;color:#000">18</span>
<span style="left:40.00px;top:345.49px;font-size:11px;font-weight:bold;color:#000">65</span>
<span style="left:107.00px;top:345.49px;font-size:11px;font-weight:bold;color:#000">VIO 1 Stck.</span>
<span style="right:720.80px;top:345.49px;font-size:11px;font-weight:bold;color:#000">1,00</span>
<span style="right:640.80px;top:345.49px;font-size:11px;font-weight:bold;color:#000">-9,00</span>
<span style="right:560.80px;top:345.49px;font-size:11px;font-weight:bold;color:#000">-9,00</span>
<span style="right:480.80px;top:345.49px;font-size:11px;font-weight:bold;color:#000">0,00</span>
<span style="right:400.80px;top:345.49px;font-size:11px;font-weight:bold;color:#000">0,00</span>
<span style="right:320.80px;top:345.49px;font-size:11px;font-weight:bold;color:#000">0,00</span>
<span style="right:240.80px;top:345.49px;font-size:11px;font-weight:bold;color:#000">0,00</span>
<span style="right:160.80px;top:345.49px;font-size:11px;font-weight:bold;color:#178c17">0,00</span>
<span style="right:80.80px;top:345.49px;font-size:11px;font-weight:bold;color:#178c17">0,00</span>
<span style="right:1.20px;top:345.49px;font-size:11px;font-weight:bold;color:#bc102e">-9,00</span>
<span style="left:0px;width:31px;text-align:center;top:365.49px;font-size:11px;font-weight:bold;color:#000">19</span>
<span style="left:40.00px;top:365.49px;font-size:11px;font-weight:bold;color:#000">77</span>
<span style="left:107.00px;top:365.49px;font-size:11px;font-weight:bold;color:#000">FUZE 1 Krt.</span>
<span style="right:720.80px;top:365.49px;font-size:11px;font-weight:bold;color:#000">1,00</span>
<span style="right:640.80px;top:365.49px;font-size:11px;font-weight:bold;color:#000">-3,00</span>
<span style="right:560.80px;top:365.49px;font-size:11px;font-weight:bold;color:#000">-3,00</span>
<span style="right:480.80px;top:365.49px;font-size:11px;font-weight:bold;color:#000">0,00</span>
<span style="right:400.80px;top:365.49px;font-size:11px;font-weight:bold;color:#000">0,00</span>
<span style="right:320.80px;top:365.49px;font-size:11px;font-weight:bold;color:#000">0,00</span>
<span style="right:240.80px;top:365.49px;font-size:11px;font-weight:bold;color:#000">0,00</span>
<span style="right:160.80px;top:365.49px;font-size:11px;font-weight:bold;color:#178c17">0,00</span>
<span style="right:80.80px;top:365.49px;font-size:11px;font-weight:bold;color:#178c17">0,00</span>
<span style="right:1.20px;top:365.49px;font-size:11px;font-weight:bold;color:#bc102e">-3,00</span>
<span style="left:0px;width:31px;text-align:center;top:385.49px;font-size:11px;font-weight:bold;color:#000">20</span>
<span style="left:40.00px;top:385.49px;font-size:11px;font-weight:bold;color:#000">84</span>
<span style="left:107.00px;top:385.49px;font-size:11px;font-weight:bold;color:#000">FUZE 1 Stck.</span>
<span style="right:720.80px;top:385.49px;font-size:11px;font-weight:bold;color:#000">1,00</span>
<span style="right:640.80px;top:385.49px;font-size:11px;font-weight:bold;color:#000">0,00</span>
<span style="right:560.80px;top:385.49px;font-size:11px;font-weight:bold;color:#000">0,00</span>
<span style="right:480.80px;top:385.49px;font-size:11px;font-weight:bold;color:#000">0,00</span>
<span style="right:400.80px;top:385.49px;font-size:11px;font-weight:bold;color:#000">0,00</span>
<span style="right:320.80px;top:385.49px;font-size:11px;font-weight:bold;color:#000">0,00</span>
<span style="right:240.80px;top:385.49px;font-size:11px;font-weight:bold;color:#000">0,00</span>
<span style="right:160.80px;top:385.49px;font-size:11px;font-weight:bold;color:#178c17">0,00</span>
<span style="right:80.80px;top:385.49px;font-size:11px;font-weight:bold;color:#178c17">0,00</span>
<span style="right:1.20px;top:385.49px;font-size:11px;font-weight:bold;color:#000">0,00</span>
<span style="left:0px;width:31px;text-align:center;top:405.49px;font-size:11px;font-weight:bold;color:#000">21</span>
<span style="left:40.00px;top:405.49px;font-size:11px;font-weight:bold;color:#000">86</span>
<span style="left:107.00px;top:405.49px;font-size:11px;font-weight:bold;color:#000">POWERADE 1 Krt.</span>
<span style="right:720.80px;top:405.49px;font-size:11px;font-weight:bold;color:#000">1,00</span>
<span style="right:640.80px;top:405.49px;font-size:11px;font-weight:bold;color:#000">-21,00</span>
<span style="right:560.80px;top:405.49px;font-size:11px;font-weight:bold;color:#000">-21,00</span>
<span style="right:480.80px;top:405.49px;font-size:11px;font-weight:bold;color:#000">0,00</span>
<span style="right:400.80px;top:405.49px;font-size:11px;font-weight:bold;color:#000">0,00</span>
<span style="right:320.80px;top:405.49px;font-size:11px;font-weight:bold;color:#000">0,00</span>
<span style="right:240.80px;top:405.49px;font-size:11px;font-weight:bold;color:#000">0,00</span>
<span style="right:160.80px;top:405.49px;font-size:11px;font-weight:bold;color:#178c17">0,00</span>
<span style="right:80.80px;top:405.49px;font-size:11px;font-weight:bold;color:#178c17">0,00</span>
<span style="right:1.20px;top:405.49px;font-size:11px;font-weight:bold;color:#bc102e">-21,00</span>
<span style="left:0px;width:31px;text-align:center;top:425.49px;font-size:11px;font-weight:bold;color:#000">22</span>
<span style="left:40.00px;top:425.49px;font-size:11px;font-weight:bold;color:#000">89</span>
<span style="left:107.00px;top:425.49px;font-size:11px;font-weight:bold;color:#000">RED 1 Krt.</span>
<span style="right:720.80px;top:425.49px;font-size:11px;font-weight:bold;color:#000">1,00</span>
<span style="right:640.80px;top:425.49px;font-size:11px;font-weight:bold;color:#000">0,00</span>
<span style="right:560.80px;top:425.49px;font-size:11px;font-weight:bold;color:#000">0,00</span>
<span style="right:480.80px;top:425.49px;font-size:11px;font-weight:bold;color:#000">0,00</span>
<span style="right:400.80px;top:425.49px;font-size:11px;font-weight:bold;color:#000">0,00</span>
<span style="right:320.80px;top:425.49px;font-size:11px;font-weight:bold;color:#000">0,00</span>
<span style="right:240.80px;top:425.49px;font-size:11px;font-weight:bold;color:#000">0,00</span>
<span style="right:160.80px;top:425.49px;font-size:11px;font-weight:bold;color:#178c17">0,00</span>
<span style="right:80.80px;top:425.49px;font-size:11px;font-weight:bold;color:#178c17">0,00</span>
<span style="right:1.20px;top:425.49px;font-size:11px;font-weight:bold;color:#000">0,00</span>
<span style="left:0px;width:31px;text-align:center;top:445.49px;font-size:11px;font-weight:bold;color:#000">23</span>
<span style="left:40.00px;top:445.49px;font-size:11px;font-weight:bold;color:#000">90</span>
<span style="left:107.00px;top:445.49px;font-size:11px;font-weight:bold;color:#000">EFFECT 1 Krt.</span>
<span style="right:720.80px;top:445.49px;font-size:11px;font-weight:bold;color:#000">1,00</span>
<span style="right:640.80px;top:445.49px;font-size:11px;font-weight:bold;color:#000">0,00</span>
<span style="right:560.80px;top:445.49px;font-size:11px;font-weight:bold;color:#000">0,00</span>
<span style="right:480.80px;top:445.49px;font-size:11px;font-weight:bold;color:#000">0,00</span>
<span style="right:400.80px;top:445.49px;font-size:11px;font-weight:bold;color:#000">0,00</span>
<span style="right:320.80px;top:445.49px;font-size:11px;font-weight:bold;color:#000">0,00</span>
<span style="right:240.80px;top:445.49px;font-size:11px;font-weight:bold;color:#000">0,00</span>
<span style="right:160.80px;top:445.49px;font-size:11px;font-weight:bold;color:#178c17">0,00</span>
<span style="right:80.80px;top:445.49px;font-size:11px;font-weight:bold;color:#178c17">0,00</span>
<span style="right:1.20px;top:445.49px;font-size:11px;font-weight:bold;color:#000">0,00</span>
<span style="left:0px;width:31px;text-align:center;top:465.49px;font-size:11px;font-weight:bold;color:#000">24</span>
<span style="left:40.00px;top:465.49px;font-size:11px;font-weight:bold;color:#000">95</span>
<span style="left:107.00px;top:465.49px;font-size:11px;font-weight:bold;color:#000">PINAR 1 Stck.</span>
<span style="right:720.80px;top:465.49px;font-size:11px;font-weight:bold;color:#000">1,00</span>
<span style="right:640.80px;top:465.49px;font-size:11px;font-weight:bold;color:#000">0,00</span>
<span style="right:560.80px;top:465.49px;font-size:11px;font-weight:bold;color:#000">0,00</span>
<span style="right:480.80px;top:465.49px;font-size:11px;font-weight:bold;color:#000">0,00</span>
<span style="right:400.80px;top:465.49px;font-size:11px;font-weight:bold;color:#000">0,00</span>
<span style="right:320.80px;top:465.49px;font-size:11px;font-weight:bold;color:#000">0,00</span>
<span style="right:240.80px;top:465.49px;font-size:11px;font-weight:bold;color:#000">0,00</span>
<span style="right:160.80px;top:465.49px;font-size:11px;font-weight:bold;color:#178c17">0,00</span>
<span style="right:80.80px;top:465.49px;font-size:11px;font-weight:bold;color:#178c17">0,00</span>
<span style="right:1.20px;top:465.49px;font-size:11px;font-weight:bold;color:#000">0,00</span>
<span style="left:0px;width:31px;text-align:center;top:485.49px;font-size:11px;font-weight:bold;color:#000">25</span>
<span style="left:40.00px;top:485.49px;font-size:11px;font-weight:bold;color:#000">96</span>
<span style="left:107.00px;top:485.49px;font-size:11px;font-weight:bold;color:#000">HAYAT 1 Stck.</span>
<span style="right:720.80px;top:485.49px;font-size:11px;font-weight:bold;color:#000">1,00</span>
<span style="right:640.80px;top:485.49px;font-size:11px;font-weight:bold;color:#000">0,00</span>
<span style="right:560.80px;top:485.49px;font-size:11px;font-weight:bold;color:#000">0,00</span>
<span style="right:480.80px;top:485.49px;font-size:11px;font-weight:bold;color:#000">0,00</span>
<span style="right:400.80px;top:485.49px;font-size:11px;font-weight:bold;color:#000">0,00</span>
<span style="right:320.80px;top:485.49px;font-size:11px;font-weight:bold;color:#000">0,00</span>
<span style="right:240.80px;top:485.49px;font-size:11px;font-weight:bold;color:#000">0,00</span>
<span style="right:160.80px;top:485.49px;font-size:11px;font-weight:bold;color:#178c17">0,00</span>
<span style="right:80.80px;top:485.49px;font-size:11px;font-weight:bold;color:#178c17">0,00</span>
<span style="right:1.20px;top:485.49px;font-size:11px;font-weight:bold;color:#000">0,00</span>
<span style="left:0px;width:31px;text-align:center;top:505.49px;font-size:11px;font-weight:bold;color:#000">26</span>
<span style="left:40.00px;top:505.49px;font-size:11px;font-weight:bold;color:#000">98</span>
<span style="left:107.00px;top:505.49px;font-size:11px;font-weight:bold;color:#000">ACQUA 1 Stck.</span>
<span style="right:720.80px;top:505.49px;font-size:11px;font-weight:bold;color:#000">1,00</span>
<span style="right:640.80px;top:505.49px;font-size:11px;font-weight:bold;color:#000">0,00</span>
<span style="right:560.80px;top:505.49px;font-size:11px;font-weight:bold;color:#000">0,00</span>
<span style="right:480.80px;top:505.49px;font-size:11px;font-weight:bold;color:#000">0,00</span>
<span style="right:400.80px;top:505.49px;font-size:11px;font-weight:bold;color:#000">0,00</span>
<span style="right:320.80px;top:505.49px;font-size:11px;font-weight:bold;color:#000">0,00</span>
<span style="right:240.80px;top:505.49px;font-size:11px;font-weight:bold;color:#000">0,00</span>
<span style="right:160.80px;top:505.49px;font-size:11px;font-weight:bold;color:#178c17">0,00</span>
<span style="right:80.80px;top:505.49px;font-size:11px;font-weight:bold;color:#178c17">0,00</span>
<span style="right:1.20px;top:505.49px;font-size:11px;font-weight:bold;color:#000">0,00</span>
<span style="left:0px;width:31px;text-align:center;top:525.49px;font-size:11px;font-weight:bold;color:#000">27</span>
<span style="left:40.00px;top:525.49px;font-size:11px;font-weight:bold;color:#000">105</span>
<span style="left:107.00px;top:525.49px;font-size:11px;font-weight:bold;color:#000">ULUDAG 1 Stck.</span>
<span style="right:720.80px;top:525.49px;font-size:11px;font-weight:bold;color:#000">1,00</span>
<span style="right:640.80px;top:525.49px;font-size:11px;font-weight:bold;color:#000">-10,34</span>
<span style="right:560.80px;top:525.49px;font-size:11px;font-weight:bold;color:#000">-16,38</span>
<span style="right:480.80px;top:525.49px;font-size:11px;font-weight:bold;color:#000">0,00</span>
<span style="right:400.80px;top:525.49px;font-size:11px;font-weight:bold;color:#000">0,00</span>
<span style="right:320.80px;top:525.49px;font-size:11px;font-weight:bold;color:#000">0,00</span>
<span style="right:240.80px;top:525.49px;font-size:11px;font-weight:bold;color:#000">0,00</span>
<span style="right:160.80px;top:525.49px;font-size:11px;font-weight:bold;color:#178c17">0,00</span>
<span style="right:80.80px;top:525.49px;font-size:11px;font-weight:bold;color:#178c17">0,00</span>
<span style="right:1.20px;top:525.49px;font-size:11px;font-weight:bold;color:#bc102e">-10,34</span>
<span style="left:0px;width:31px;text-align:center;top:545.49px;font-size:11px;font-weight:bold;color:#000">28</span>
<span style="left:40.00px;top:545.49px;font-size:11px;font-weight:bold;color:#000">107</span>
<span style="left:107.00px;top:545.49px;font-size:11px;font-weight:bold;color:#000">SCHWEPPES 1 Stck.</span>
<span style="right:720.80px;top:545.49px;font-size:11px;font-weight:bold;color:#000">1,00</span>
<span style="right:640.80px;top:545.49px;font-size:11px;font-weight:bold;color:#000">-12,00</span>
<span style="right:560.80px;top:545.49px;font-size:11px;font-weight:bold;color:#000">-12,00</span>
<span style="right:480.80px;top:545.49px;font-size:11px;font-weight:bold;color:#000">0,00</span>
<span style="right:400.80px;top:545.49px;font-size:11px;font-weight:bold;color:#000">0,00</span>
<span style="right:320.80px;top:545.49px;font-size:11px;font-weight:bold;color:#000">0,00</span>
<span style="right:240.80px;top:545.49px;font-size:11px;font-weight:bold;color:#000">0,00</span>
<span style="right:160.80px;top:545.49px;font-size:11px;font-weight:bold;color:#178c17">0,00</span>
<span style="right:80.80px;top:545.49px;font-size:11px;font-weight:bold;color:#178c17">0,00</span>
<span style="right:1.20px;top:545.49px;font-size:11px;font-weight:bold;color:#bc102e">-12,00</span>
<span style="left:0px;width:31px;text-align:center;top:565.49px;font-size:11px;font-weight:bold;color:#000">29</span>
<span style="left:40.00px;top:565.49px;font-size:11px;font-weight:bold;color:#000">110</span>
<span style="left:107.00px;top:565.49px;font-size:11px;font-weight:bold;color:#000">HIRTENKÄSE 1 Kg.</span>
<span style="right:720.80px;top:565.49px;font-size:11px;font-weight:bold;color:#000">1,00</span>
<span style="right:640.80px;top:565.49px;font-size:11px;font-weight:bold;color:#000">15,00</span>
<span style="right:560.80px;top:565.49px;font-size:11px;font-weight:bold;color:#000">15,00</span>
<span style="right:480.80px;top:565.49px;font-size:11px;font-weight:bold;color:#000">0,00</span>
<span style="right:400.80px;top:565.49px;font-size:11px;font-weight:bold;color:#000">0,00</span>
<span style="right:320.80px;top:565.49px;font-size:11px;font-weight:bold;color:#000">0,00</span>
<span style="right:240.80px;top:565.49px;font-size:11px;font-weight:bold;color:#000">0,00</span>
<span style="right:160.80px;top:565.49px;font-size:11px;font-weight:bold;color:#178c17">0,00</span>
<span style="right:80.80px;top:565.49px;font-size:11px;font-weight:bold;color:#178c17">0,00</span>
<span style="right:1.20px;top:565.49px;font-size:11px;font-weight:bold;color:#000">15,00</span>
<span style="left:0px;width:31px;text-align:center;top:585.49px;font-size:11px;font-weight:bold;color:#000">30</span>
<span style="left:40.00px;top:585.49px;font-size:11px;font-weight:bold;color:#000">111</span>
<span style="left:107.00px;top:585.49px;font-size:11px;font-weight:bold;color:#000">GORGONZOLA 1 Kg.</span>
<span style="right:720.80px;top:585.49px;font-size:11px;font-weight:bold;color:#000">1,00</span>
<span style="right:640.80px;top:585.49px;font-size:11px;font-weight:bold;color:#000">-74,00</span>
<span style="right:560.80px;top:585.49px;font-size:11px;font-weight:bold;color:#000">-74,00</span>
<span style="right:480.80px;top:585.49px;font-size:11px;font-weight:bold;color:#000">0,00</span>
<span style="right:400.80px;top:585.49px;font-size:11px;font-weight:bold;color:#000">0,00</span>
<span style="right:320.80px;top:585.49px;font-size:11px;font-weight:bold;color:#000">0,00</span>
<span style="right:240.80px;top:585.49px;font-size:11px;font-weight:bold;color:#000">0,00</span>
<span style="right:160.80px;top:585.49px;font-size:11px;font-weight:bold;color:#178c17">0,00</span>
<span style="right:80.80px;top:585.49px;font-size:11px;font-weight:bold;color:#178c17">0,00</span>
<span style="right:1.20px;top:585.49px;font-size:11px;font-weight:bold;color:#bc102e">-74,00</span>
<span style="left:0px;width:31px;text-align:center;top:605.49px;font-size:11px;font-weight:bold;color:#000">31</span>
<span style="left:40.00px;top:605.49px;font-size:11px;font-weight:bold;color:#000">112</span>
<span style="left:107.00px;top:605.49px;font-size:11px;font-weight:bold;color:#000">WEIZENMEHL 1 Kg.</span>
<span style="right:720.80px;top:605.49px;font-size:11px;font-weight:bold;color:#000">1,00</span>
<span style="right:640.80px;top:605.49px;font-size:11px;font-weight:bold;color:#000">-1,00</span>
<span style="right:560.80px;top:605.49px;font-size:11px;font-weight:bold;color:#000">-1,00</span>
<span style="right:480.80px;top:605.49px;font-size:11px;font-weight:bold;color:#000">0,00</span>
<span style="right:400.80px;top:605.49px;font-size:11px;font-weight:bold;color:#000">0,00</span>
<span style="right:320.80px;top:605.49px;font-size:11px;font-weight:bold;color:#000">1,00</span>
<span style="right:240.80px;top:605.49px;font-size:11px;font-weight:bold;color:#000">1,00</span>
<span style="right:160.80px;top:605.49px;font-size:11px;font-weight:bold;color:#178c17">0,00</span>
<span style="right:80.80px;top:605.49px;font-size:11px;font-weight:bold;color:#178c17">0,00</span>
<span style="right:1.20px;top:605.49px;font-size:11px;font-weight:bold;color:#bc102e">-2,00</span>
<span style="left:0px;width:31px;text-align:center;top:625.49px;font-size:11px;font-weight:bold;color:#000">32</span>
<span style="left:40.00px;top:625.49px;font-size:11px;font-weight:bold;color:#000">113</span>
<span style="left:107.00px;top:625.49px;font-size:11px;font-weight:bold;color:#000">KNOBLAUCH 1 Kg.</span>
<span style="right:720.80px;top:625.49px;font-size:11px;font-weight:bold;color:#000">1,00</span>
<span style="right:640.80px;top:625.49px;font-size:11px;font-weight:bold;color:#000">-10,00</span>
<span style="right:560.80px;top:625.49px;font-size:11px;font-weight:bold;color:#000">-10,00</span>
<span style="right:480.80px;top:625.49px;font-size:11px;font-weight:bold;color:#000">0,00</span>
<span style="right:400.80px;top:625.49px;font-size:11px;font-weight:bold;color:#000">0,00</span>
<span style="right:320.80px;top:625.49px;font-size:11px;font-weight:bold;color:#000">2,00</span>
<span style="right:240.80px;top:625.49px;font-size:11px;font-weight:bold;color:#000">2,00</span>
<span style="right:160.80px;top:625.49px;font-size:11px;font-weight:bold;color:#178c17">0,00</span>
<span style="right:80.80px;top:625.49px;font-size:11px;font-weight:bold;color:#178c17">0,00</span>
<span style="right:1.20px;top:625.49px;font-size:11px;font-weight:bold;color:#bc102e">-12,00</span>
</div>
<span style="left:29.50px;width:120px;text-align:center;top:150.69px;font-size:11px;font-weight:bold;color:#111">ARNR</span>
<span style="left:162.50px;width:120px;text-align:center;top:150.69px;font-size:11px;font-weight:bold;color:#111">Artikeltext1</span>
<span style="left:296.00px;width:120px;text-align:center;top:150.69px;font-size:11px;font-weight:bold;color:#111">Inhalt</span>
<span style="left:529.50px;width:120px;text-align:center;top:150.69px;font-size:11px;font-weight:bold;color:#111">EKKoli</span>
<span style="left:609.50px;width:120px;text-align:center;top:150.69px;font-size:11px;font-weight:bold;color:#111">EKMenge</span>
<span style="left:689.50px;width:120px;text-align:center;top:150.69px;font-size:11px;font-weight:bold;color:#111">VKKoli</span>
<span style="left:769.50px;width:120px;text-align:center;top:150.69px;font-size:11px;font-weight:bold;color:#111">VKMenge</span>
<span style="left:849.50px;width:120px;text-align:center;top:150.69px;font-size:11px;font-weight:bold;color:#111">KorrKoli</span>
<span style="left:929.50px;width:120px;text-align:center;top:150.69px;font-size:11px;font-weight:bold;color:#111">KorrMg</span>
<span style="left:1009.50px;width:120px;text-align:center;top:150.69px;font-size:11px;font-weight:bold;color:#111">EndBKoli</span>
<span style="left:369.50px;width:120px;text-align:center;top:143.69px;font-size:11px;font-weight:bold;color:#111">Anfangs</span>
<span style="left:369.50px;width:120px;text-align:center;top:158.19px;font-size:11px;font-weight:bold;color:#111">BestKoli</span>
<span style="left:449.50px;width:120px;text-align:center;top:143.69px;font-size:11px;font-weight:bold;color:#111">Anfangs</span>
<span style="left:449.50px;width:120px;text-align:center;top:158.19px;font-size:11px;font-weight:bold;color:#111">BestMenge</span>
<div style="left:24px;top:807px;width:1086px;height:17px;background:#f0f0f0;"></div>
<div style="left:1110px;top:138px;width:17px;height:686px;background:#f0f0f0;"></div>
<div style="left:41px;top:814px;width:753px;height:2px;background:#7b7b7b;"></div>
<div style="left:1117px;top:155px;width:2px;height:22px;background:#7b7b7b;"></div>
<div style="left:24px;top:824px;width:1104px;height:1px;background:#fff;"></div>
<div style="left:1127px;top:138px;width:1px;height:687px;background:#fff;"></div>
<div class="btn" style="left:54px;top:830px;width:145px;height:26px"></div>
<span style="left:54.00px;width:145px;text-align:center;top:837.24px;font-size:12px;font-weight:bold;color:#111;">Bestände Null setzen</span>
<div class="btn" style="left:209px;top:830px;width:120px;height:26px"></div>
<span style="left:209.00px;width:120px;text-align:center;top:837.24px;font-size:12px;font-weight:bold;color:#111;">Abschliessen</span>
<div class="btn" style="left:800px;top:830px;width:107px;height:26px"></div>
<span style="left:800.00px;width:107px;text-align:center;top:837.24px;font-size:12px;font-weight:bold;color:#111;">Export</span>
<div class="btn" style="left:925px;top:830px;width:107px;height:26px"></div>
<span style="left:925.00px;width:107px;text-align:center;top:837.24px;font-size:12px;font-weight:bold;color:#111;">Drucken</span>
<div class="btn" style="left:1040px;top:830px;width:87px;height:26px"></div>
<span style="left:1040.00px;width:87px;text-align:center;top:837.24px;font-size:12px;font-weight:bold;color:#111;">Schliessen</span>
</body></html>
